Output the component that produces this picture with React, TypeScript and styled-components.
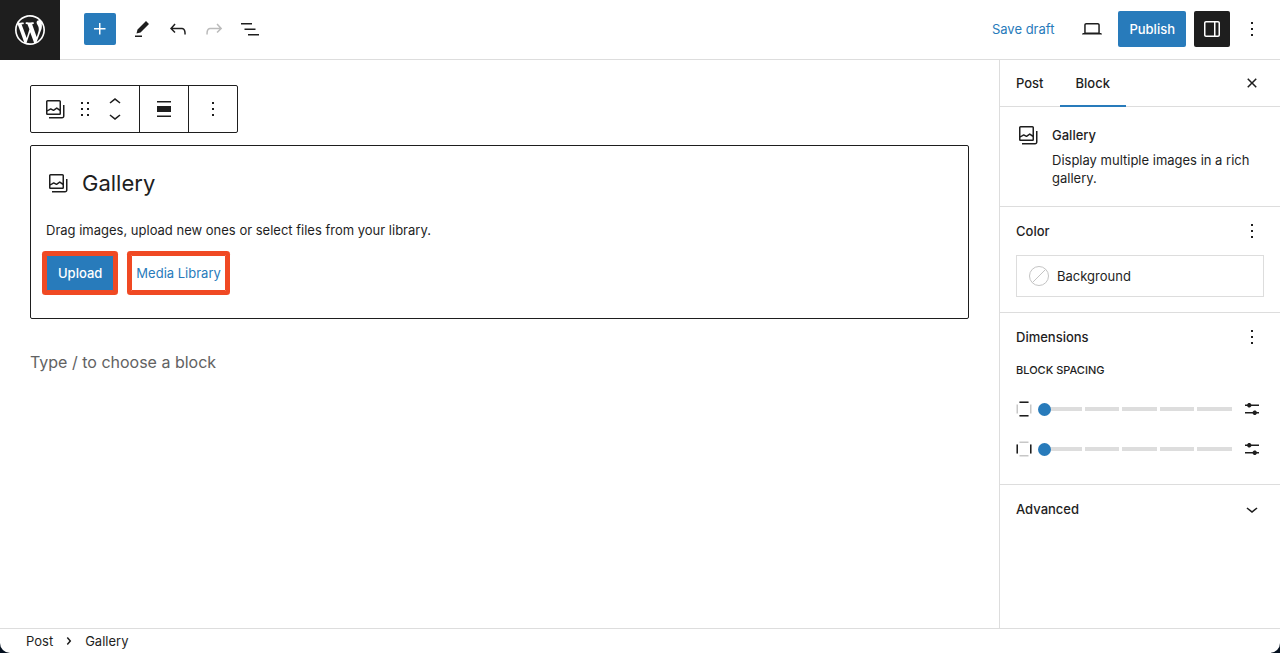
import React, { useState } from 'react';
import styled, { createGlobalStyle } from 'styled-components';

const ink = '#1e1e1e';
const blue = '#287bbb';
const line = '#dddddd';
const highlight = '#f04923';

const GlobalStyle = createGlobalStyle`
  *, *::before, *::after { box-sizing: border-box; }
  body {
    margin: 0;
    background: #04101f;
    color: ${ink};
    font-family: Inter, "Liberation Sans", sans-serif;
    font-size: 13px;
    line-height: 18px;
  }
  button, input { font: inherit; color: inherit; }
  h1, h2, p, ol { margin: 0; padding: 0; }
`;

const Shell = styled.div`
  display: flex;
  flex-direction: column;
  min-height: 100vh;
  background: #fff;
  border-radius: 0 0 10px 10px;
  overflow: hidden;
`;

const Header = styled.header`
  display: flex;
  align-items: center;
  justify-content: space-between;
  height: 60px;
  box-shadow: inset 0 -1px ${line};
`;

const HeaderGroup = styled.div<{ $gap?: number }>`
  display: flex;
  align-items: center;
  gap: ${(p) => p.$gap ?? 0}px;
  padding-bottom: 2px;
`;

const HeaderActions = styled(HeaderGroup)`
  margin-left: auto;
  padding-right: 14px;
`;

const HomeLink = styled.a`
  display: flex;
  align-items: center;
  justify-content: center;
  width: 60px;
  height: 60px;
  margin-right: 24px;
  background: ${ink};
  color: #fff;
`;

const IconButton = styled.button<{ $w?: number; $h?: number }>`
  display: flex;
  align-items: center;
  justify-content: center;
  flex: none;
  width: ${(p) => p.$w ?? 36}px;
  height: ${(p) => p.$h ?? 36}px;
  padding: 0;
  border: 0;
  background: none;
  border-radius: 2px;
  cursor: pointer;

  &:disabled { color: #bbb; cursor: default; }
`;

const InserterButton = styled(IconButton)`
  margin-right: 8px;
  background: ${blue};
  color: #fff;
`;

const SidebarToggle = styled(IconButton)`
  background: ${ink};
  color: #fff;
`;

const TextButton = styled.button<{ $pad?: number }>`
  height: 36px;
  padding: 0 ${(p) => p.$pad ?? 12}px;
  border: 0;
  border-radius: 2px;
  background: none;
  color: ${blue};
  white-space: nowrap;
  cursor: pointer;
`;

const PrimaryButton = styled(TextButton)`
  background: ${blue};
  color: #fff;
  font-weight: 500;
`;

const Body = styled.div`
  display: flex;
  flex: 1;
`;

const Canvas = styled.main`
  flex: 1;
  min-width: 0;
  padding: 25px 30px;
`;

const BlockToolbar = styled.div`
  display: inline-flex;
  height: 48px;
  border: 1px solid ${ink};
  border-radius: 2px;
`;

const ToolbarGroup = styled.div`
  display: flex;
  align-items: center;
  gap: 6px;
  padding: 0 12px;

  & + & { border-left: 1px solid ${ink}; }
`;

const Movers = styled.div`
  display: flex;
  flex-direction: column;
`;

const MoverButton = styled(IconButton)`
  overflow: hidden;
`;

const Placeholder = styled.section`
  margin-top: 12px;
  padding: 15px 15px 27px;
  border: 1px solid ${ink};
  border-radius: 2px;
`;

const PlaceholderTitle = styled.h1`
  display: flex;
  align-items: center;
  gap: 12px;
  height: 44px;
  font-size: 22px;
  font-weight: 400;
`;

const PlaceholderText = styled.p`
  margin: 16px 0;
`;

const PlaceholderActions = styled.div`
  display: flex;
  gap: 17px;
`;

const UploadButton = styled(PrimaryButton)`
  border-radius: 1px;
  box-shadow: 0 0 0 4px ${highlight}, inset 0 0 0 1px ${highlight};
`;

const LibraryButton = styled(TextButton)`
  border-radius: 1px;
  box-shadow: 0 0 0 4px ${highlight}, inset 0 0 0 1px ${highlight};
`;

const ParagraphInput = styled.input`
  display: block;
  width: 100%;
  height: 28px;
  margin-top: 29px;
  padding: 0;
  border: 0;
  outline: 0;
  font-size: 16px;

  &::placeholder { color: #626262; opacity: 1; }
`;

const Sidebar = styled.aside`
  flex: none;
  width: 281px;
  border-left: 1px solid ${line};
`;

const TabBar = styled.div`
  display: flex;
  align-items: center;
  height: 47px;
  padding-right: 12px;
  border-bottom: 1px solid ${line};
`;

const Tabs = styled.div`
  display: flex;
  flex: 1;
`;

const Tab = styled.button<{ $active: boolean }>`
  height: 47px;
  padding: 0 16px;
  border: 0;
  background: none;
  box-shadow: ${(p) => (p.$active ? `inset 0 -2px ${blue}` : 'none')};
  font-weight: 500;
  cursor: pointer;
`;

const Section = styled.section`
  padding: 12px 16px 15px;

  & + & { border-top: 1px solid ${line}; }
`;

const BlockCard = styled.section`
  display: flex;
  gap: 12px;
  padding: 16px 16px 19px;
  border-bottom: 1px solid ${line};
`;

const BlockCardText = styled.div`
  padding-top: 3px;
`;

const Heading = styled.h2`
  font-size: 13px;
  font-weight: 500;
`;

const Description = styled.p`
  margin: 7px 0 0;
`;

const SectionHeader = styled.div`
  display: flex;
  align-items: center;
  justify-content: space-between;
  height: 24px;
`;

const ColorItem = styled.button`
  display: flex;
  align-items: center;
  gap: 8px;
  width: 100%;
  height: 42px;
  margin-top: 12px;
  padding: 0 12px;
  border: 1px solid ${line};
  background: none;
  cursor: pointer;
`;

const Legend = styled.h2`
  margin: 12px 0 10px;
  font-size: 11px;
  font-weight: 500;
  text-transform: uppercase;
`;

const SpacingRow = styled.label`
  display: flex;
  align-items: center;
  height: 40px;
`;

const RowIcon = styled.span`
  display: flex;
  width: 22px;
  margin-left: -4px;
  margin-right: 4px;
`;

const Slider = styled.input`
  appearance: none;
  flex: 1;
  min-width: 0;
  height: 14px;
  margin: 0 8px 0 0;
  background: repeating-linear-gradient(to right, transparent 0 3px, ${line} 3px 20%)
    right center / calc(100% - 6px) 4px no-repeat;

  &::-webkit-slider-thumb {
    appearance: none;
    width: 13px;
    height: 13px;
    border-radius: 50%;
    background: ${blue};
  }
`;

const Footer = styled.footer`
  height: 25px;
  padding: 0 26px;
  border-top: 1px solid ${line};
`;

const Crumbs = styled.ol`
  display: flex;
  align-items: center;
  gap: 4px;
  height: 24px;
  list-style: none;

  li { display: flex; align-items: center; gap: 4px; }
  a { color: inherit; text-decoration: none; }
`;

const paths = {
  plus: 'M11 12.5V17.5H12.5V12.5H17.5V11H12.5V6H11V11H6V12.5H11Z',
  pencil: 'm19 7-3-3-8.5 8.5-1 4 4-1L19 7Zm-7 11.5H5V20h7v-1.5Z',
  undo: 'M18.3 11.7c-.6-.6-1.4-.9-2.3-.9H6.7l2.9-3.3-1.1-1-4.5 5L8.5 16l1-1-2.7-2.7H16c.5 0 .9.2 1.3.5 1 1 1 3.4 1 4.5v.3h1.5v-.2c0-1.5 0-4.3-1.5-5.7z',
  redo: 'M15.6 6.5l-1.1 1 2.9 3.3H8c-.9 0-1.7.3-2.3.9-1.4 1.5-1.4 4.2-1.4 5.6v.2h1.5v-.3c0-1.1 0-3.5 1-4.5.3-.3.7-.5 1.3-.5h9.2L14.5 15l1.1 1.1 4.6-4.6-4.6-5z',
  listView: 'M3 6h11v1.5H3V6Zm3.5 5.5h11V13h-11v-1.5ZM21 17H10v1.5h11V17Z',
  desktop: 'M20.5 16h-.7V8c0-1.1-.9-2-2-2H6.2c-1.1 0-2 .9-2 2v8h-.7c-.8 0-1.5.7-1.5 1.5h20c0-.8-.7-1.5-1.5-1.5zM5.7 8c0-.3.2-.5.5-.5h11.6c.3 0 .5.2.5.5v7.6H5.7V8z',
  drawer: 'M18 4H6c-1.1 0-2 .9-2 2v12c0 1.1.9 2 2 2h12c1.1 0 2-.9 2-2V6c0-1.1-.9-2-2-2zm-4 14.5H6c-.3 0-.5-.2-.5-.5V6c0-.3.2-.5.5-.5h8v13zm4.5-.5c0 .3-.2.5-.5.5h-2.5v-13H18c.3 0 .5.2.5.5v12z',
  more: 'M13 19h-2v-2h2v2zm0-6h-2v-2h2v2zm0-6h-2V5h2v2z',
  close: 'M12 13.06l3.712 3.713 1.061-1.06L13.061 12l3.712-3.712-1.06-1.06L12 10.938 8.288 7.227l-1.061 1.06L10.939 12l-3.712 3.712 1.06 1.061L12 13.061z',
  drag: 'M8 7h2V5H8v2zm0 6h2v-2H8v2zm0 6h2v-2H8v2zm6-14v2h2V5h-2zm0 8h2v-2h-2v2zm0 6h2v-2h-2v2z',
  up: 'M6.5 12.4L12 8l5.5 4.4-.9 1.2L12 10l-4.5 3.6-1-1.2z',
  down: 'M17.5 11.6L12 16l-5.5-4.4.9-1.2L12 14l4.5-3.6 1 1.2z',
  right: 'M10.8622 8.04053L14.2805 12.0286L10.8622 16.0167L9.72327 15.0405L12.3049 12.0286L9.72327 9.01672L10.8622 8.04053Z',
  align: 'M19 5.5H5V4h14v1.5ZM19 20H5v-1.5h14V20ZM5 9h14v6H5V9Z',
  gallery: 'M16.375 4.5H4.625a.125.125 0 0 0-.125.125v8.254l2.859-1.54a.75.75 0 0 1 .68-.016l2.384 1.142 2.89-2.074a.75.75 0 0 1 .874 0l2.313 1.66V4.625a.125.125 0 0 0-.125-.125Zm.125 9.398-2.75-1.975-2.813 2.02a.75.75 0 0 1-.76.067l-2.444-1.17L4.5 14.583v1.792c0 .069.056.125.125.125h11.75a.125.125 0 0 0 .125-.125v-2.477ZM4.625 3C3.728 3 3 3.728 3 4.625v11.75C3 17.273 3.728 18 4.625 18h11.75c.898 0 1.625-.727 1.625-1.625V4.625C18 3.728 17.273 3 16.375 3H4.625ZM20 8v11c0 .69-.31 1-.999 1H6v1.5h13.001c1.52 0 2.499-.982 2.499-2.5V8H20Z',
  settings: 'm19 7.5h-7.628c-.3089-.87389-1.1423-1.5-2.122-1.5-.97966 0-1.81309.62611-2.12197 1.5h-2.12803v1.5h2.12803c.30888.87389 1.14231 1.5 2.12197 1.5.9797 0 1.8131-.62611 2.122-1.5h7.628zM19 15h-2.128c-.3089-.8739-1.1423-1.5-2.122-1.5s-1.8131.6261-2.122 1.5h-7.628v1.5h7.628c.3089.8739 1.1423 1.5 2.122 1.5s1.8131-.6261 2.122-1.5h2.128z',
  sides: 'm7.5 6h9v-1.5h-9zm0 13.5h9v-1.5h-9zm-3-3h1.5v-9h-1.5zm13.5-9v9h1.5v-9z',
  sidesVertical: 'm7.5 6h9v-1.5h-9zM7.5 19.5h9v-1.5h-9z',
  sidesHorizontal: 'm4.5 7.5v9h1.5v-9zM18 7.5v9h1.5v-9z',
  wordpress: 'M20 10c0-5.51-4.49-10-10-10C4.48 0 0 4.49 0 10c0 5.52 4.48 10 10 10 5.51 0 10-4.48 10-10zM7.78 15.37L4.37 6.22c.55-.02 1.17-.08 1.17-.08.5-.06.44-1.13-.06-1.11 0 0-1.45.11-2.37.11-.18 0-.37 0-.58-.01C4.12 2.69 6.87 1.11 10 1.11c2.33 0 4.45.87 6.05 2.34-.68-.11-1.65.39-1.65 1.58 0 .74.45 1.36.9 2.1.35.61.55 1.36.55 2.46 0 1.49-1.4 5-1.4 5l-3.03-8.37c.54-.02.82-.17.82-.17.5-.05.44-1.25-.06-1.22 0 0-1.44.12-2.38.12-.87 0-2.33-.12-2.33-.12-.5-.03-.56 1.2-.06 1.22l.92.08 1.26 3.41zM17.41 10c.24-.64.74-1.87.43-4.25.7 1.29 1.05 2.71 1.05 4.25 0 3.29-1.73 6.24-4.4 7.78.97-2.59 1.94-5.2 2.92-7.78zM6.1 18.09C3.12 16.65 1.11 13.53 1.11 10c0-1.3.23-2.48.72-3.59C3.25 10.3 4.67 14.2 6.1 18.09zm4.03-6.63l2.58 6.98c-.86.29-1.76.45-2.71.45-.79 0-1.57-.11-2.29-.33.81-2.38 1.62-4.74 2.42-7.1z',
};

type IconName = keyof typeof paths;

const Svg = styled.svg`
  display: block;
  flex: none;
  fill: currentColor;
`;

function Icon({ name, size = 24, viewBox = '0 0 24 24' }: { name: IconName; size?: number; viewBox?: string }) {
  return (
    <Svg width={size} height={size} viewBox={viewBox} fillRule="evenodd" aria-hidden="true">
      <path d={paths[name]} />
    </Svg>
  );
}

function SidesIcon({ axis }: { axis: 'sidesVertical' | 'sidesHorizontal' }) {
  return (
    <Svg width={24} height={24} viewBox="0 0 24 24" aria-hidden="true">
      <path d={paths.sides} opacity={0.25} />
      <path d={paths[axis]} />
    </Svg>
  );
}

function EmptySwatch() {
  return (
    <svg width="20" height="20" viewBox="0 0 20 20" fill="none" stroke="#c4c4c4" aria-hidden="true">
      <circle cx="10" cy="10" r="9.5" />
      <path d="M3.5 16.5l13-13" />
    </svg>
  );
}

function SpacingControl({ axis, label }: { axis: 'sidesVertical' | 'sidesHorizontal'; label: string }) {
  const [value, setValue] = useState(0);
  return (
    <SpacingRow>
      <RowIcon><SidesIcon axis={axis} /></RowIcon>
      <Slider
        type="range"
        min={0}
        max={5}
        value={value}
        aria-label={label}
        onChange={(e) => setValue(Number(e.target.value))}
      />
      <IconButton type="button" $w={24} $h={24} aria-label={`Set custom ${label}`}>
        <Icon name="settings" />
      </IconButton>
    </SpacingRow>
  );
}

export default function App() {
  const [tab, setTab] = useState('Block');
  return (
    <>
      <GlobalStyle />
      <Shell>
        <Header>
          <HomeLink href="#" aria-label="View posts">
            <Icon name="wordpress" size={36} viewBox="-2 -2 24 24" />
          </HomeLink>
          <HeaderGroup>
            <InserterButton $w={32} $h={32} aria-label="Add block"><Icon name="plus" /></InserterButton>
            <IconButton aria-label="Tools"><Icon name="pencil" /></IconButton>
            <IconButton aria-label="Undo"><Icon name="undo" /></IconButton>
            <IconButton aria-label="Redo" disabled><Icon name="redo" /></IconButton>
            <IconButton aria-label="Document overview"><Icon name="listView" /></IconButton>
          </HeaderGroup>
          <HeaderActions $gap={8}>
            <TextButton>Save draft</TextButton>
            <IconButton aria-label="View"><Icon name="desktop" /></IconButton>
            <PrimaryButton $pad={11}>Publish</PrimaryButton>
            <SidebarToggle aria-label="Settings"><Icon name="drawer" /></SidebarToggle>
            <IconButton $w={28} aria-label="Options"><Icon name="more" /></IconButton>
          </HeaderActions>
        </Header>

        <Body>
          <Canvas>
            <BlockToolbar role="toolbar" aria-label="Block tools">
              <ToolbarGroup>
                <IconButton $w={24} aria-label="Gallery"><Icon name="gallery" /></IconButton>
                <IconButton $w={24} aria-label="Drag"><Icon name="drag" /></IconButton>
                <Movers>
                  <MoverButton $w={24} $h={14} aria-label="Move up"><Icon name="up" /></MoverButton>
                  <MoverButton $w={24} $h={14} aria-label="Move down"><Icon name="down" /></MoverButton>
                </Movers>
              </ToolbarGroup>
              <ToolbarGroup>
                <IconButton $w={24} aria-label="Align"><Icon name="align" /></IconButton>
              </ToolbarGroup>
              <ToolbarGroup>
                <IconButton $w={24} aria-label="Options"><Icon name="more" /></IconButton>
              </ToolbarGroup>
            </BlockToolbar>

            <Placeholder>
              <PlaceholderTitle><Icon name="gallery" />Gallery</PlaceholderTitle>
              <PlaceholderText>Drag images, upload new ones or select files from your library.</PlaceholderText>
              <PlaceholderActions>
                <UploadButton>Upload</UploadButton>
                <LibraryButton $pad={5}>Media Library</LibraryButton>
              </PlaceholderActions>
            </Placeholder>

            <ParagraphInput aria-label="Empty block" placeholder="Type / to choose a block" />
          </Canvas>

          <Sidebar>
            <TabBar>
              <Tabs role="tablist">
                {['Post', 'Block'].map((name) => (
                  <Tab key={name} role="tab" aria-selected={tab === name} $active={tab === name} onClick={() => setTab(name)}>
                    {name}
                  </Tab>
                ))}
              </Tabs>
              <IconButton $w={32} $h={32} aria-label="Close settings"><Icon name="close" /></IconButton>
            </TabBar>

            <BlockCard>
              <Icon name="gallery" />
              <BlockCardText>
                <Heading>Gallery</Heading>
                <Description>Display multiple images in a rich gallery.</Description>
              </BlockCardText>
            </BlockCard>

            <Section>
              <SectionHeader>
                <Heading>Color</Heading>
                <IconButton $w={24} $h={24} aria-label="Color options"><Icon name="more" /></IconButton>
              </SectionHeader>
              <ColorItem><EmptySwatch />Background</ColorItem>
            </Section>

            <Section>
              <SectionHeader>
                <Heading>Dimensions</Heading>
                <IconButton $w={24} $h={24} aria-label="Dimensions options"><Icon name="more" /></IconButton>
              </SectionHeader>
              <Legend>Block spacing</Legend>
              <SpacingControl axis="sidesVertical" label="vertical block spacing" />
              <SpacingControl axis="sidesHorizontal" label="horizontal block spacing" />
            </Section>

            <Section>
              <SectionHeader>
                <Heading>Advanced</Heading>
                <IconButton $w={24} $h={24} aria-label="Show advanced"><Icon name="down" /></IconButton>
              </SectionHeader>
            </Section>
          </Sidebar>
        </Body>

        <Footer>
          <Crumbs aria-label="Block breadcrumb">
            <li><a href="#">Post</a><Icon name="right" /></li>
            <li aria-current="true">Gallery</li>
          </Crumbs>
        </Footer>
      </Shell>
    </>
  );
}
